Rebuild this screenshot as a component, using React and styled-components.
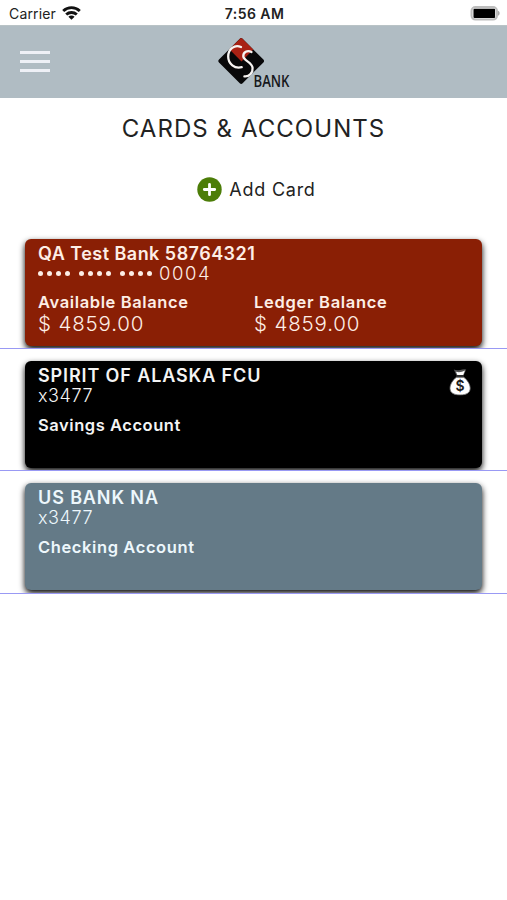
import React from "react";
import styled, { createGlobalStyle } from "styled-components";

const GlobalStyle = createGlobalStyle`
  body {
    margin: 0;
    background: #fff;
    font-family: Inter, "Liberation Sans", sans-serif;
  }
  * {
    box-sizing: border-box;
  }
`;

const Screen = styled.div`
  width: 507px;
  height: 900px;
  background: #fff;
  overflow: hidden;
`;

const StatusBar = styled.div`
  display: grid;
  grid-template-columns: 1fr auto 1fr;
  align-items: center;
  height: 25px;
  padding: 2px 7px 0 9px;
  font-size: 14px;
  line-height: 20px;
  color: #222;
`;

const Carrier = styled.div`
  display: flex;
  align-items: center;
  gap: 6px;
  letter-spacing: 0.15px;
`;

const Time = styled.div`
  font-weight: 600;
  letter-spacing: 0.45px;
`;

const BatteryHolder = styled.div`
  display: flex;
  justify-content: flex-end;
`;

const Header = styled.header`
  display: grid;
  grid-template-columns: 1fr auto 1fr;
  height: 73px;
  padding: 0 20px;
  background: #b0bcc3;
  border-top: 1px solid #b9c3c6;
`;

const MenuButton = styled.button`
  display: flex;
  flex-direction: column;
  gap: 6px;
  width: 30px;
  padding: 25px 0 0;
  border: 0;
  background: none;
`;

const MenuLine = styled.span`
  width: 30px;
  height: 3px;
  background: #eef0f6;
`;

const Logo = styled.svg`
  display: block;
  margin-top: 10px;
  overflow: visible;
`;

const Title = styled.h1`
  margin: 16px 0 0;
  font-size: 24px;
  line-height: 30px;
  font-weight: 400;
  letter-spacing: 1.05px;
  text-align: center;
  color: #222;
`;

const AddCard = styled.div`
  display: flex;
  justify-content: center;
  align-items: center;
  gap: 7px;
  margin-top: 32px;
  padding-left: 6px;
  height: 27px;
  font-size: 18px;
  letter-spacing: 0.75px;
  color: #222;
`;

const CardList = styled.div`
  margin-top: 24px;
`;

const Row = styled.div`
  height: 122.2px;
  padding: 12px 25px 0;
  border-bottom: 1px solid #9999f4;
  overflow: hidden;
`;

const Card = styled.div`
  display: flex;
  justify-content: space-between;
  height: 107px;
  padding: 4px 10px 0 13px;
  border-radius: 6px;
  background: ${(props) => props.$color};
  box-shadow: 0 3px 6px #000;
  color: ${(props) => props.$text};
`;

const CardBody = styled.div`
  flex: 1;
`;

const Line = styled.div`
  display: flex;
  align-items: center;
  height: ${(props) => props.$height}px;
  font-size: ${(props) => props.$size}px;
  font-weight: ${(props) => props.$weight || 300};
  letter-spacing: ${(props) => props.$spacing || 0}px;
  white-space: pre;
`;

const Mask = styled.span`
  display: flex;
  gap: 9px;
  margin-right: 7px;
`;

const DotGroup = styled.span`
  display: flex;
  gap: 4px;
`;

const Dot = styled.i`
  width: 5px;
  height: 5px;
  border-radius: 50%;
  background: currentColor;
`;

const Balances = styled.div`
  display: grid;
  grid-template-columns: 216px 1fr;
  margin-top: 9px;
`;

const BagIcon = styled.svg`
  margin-top: 3px;
`;

const WifiIcon = () => (
  <svg width="19" height="15" viewBox="0 0 19 15">
    <g fill="none" stroke="#111" strokeWidth="2.9">
      <path d="M1.2 5C6 .5 13 .5 17.8 5" />
      <path d="M4.2 8.5c3-2.7 7.6-2.7 10.6 0" />
    </g>
    <path d="M6.4 10.7c1.8-1.5 4.4-1.5 6.2 0L9.5 13.8z" fill="#111" />
  </svg>
);

const BatteryIcon = () => (
  <svg width="30" height="15" viewBox="0 0 30 15">
    <rect x="1.5" y="1" width="25.5" height="12.6" rx="4" fill="#f2f2f2" stroke="#bdbdbd" strokeWidth="2" />
    <rect x="3.5" y="2.8" width="21.6" height="9.2" rx="1" fill="#000" />
    <path d="M28 4.8c2.2.8 2.2 4.2 0 5z" fill="#aaa" />
  </svg>
);

const BankLogo = () => (
  <Logo width="73" height="60" viewBox="0 0 73 60">
    <rect x="-16.7" y="-16.7" width="33.4" height="33.4" rx="2" transform="translate(24.2 25) rotate(45)" fill="#080809" />
    <path d="M23 2.7q1.2-1.2 2.4 0L36.3 13.6 24.5 25.4 12.4 13.3z" fill="#a82114" />
    <g fill="none" stroke="#f7f4f2" strokeWidth="2.3" strokeLinecap="round">
      <path d="M24 11C17.5 8 11.2 13.2 11.2 20.5c0 7.5 6.5 12.5 13.5 10.7" />
      <path d="M34.5 16c-4.2-2.4-8.5.4-8.2 4.4.4 4.6 8.7 5.6 9.3 11.4.4 4.6-3.2 9.200-8.200 8.500" />
    </g>
    <text
      x="36.5"
      y="50.5"
      fontFamily="Open Sans, sans-serif"
      fontSize="17"
      fontWeight="600"
      textLength="36"
      lengthAdjust="spacingAndGlyphs"
      fill="#17191c"
    >
      BANK
    </text>
  </Logo>
);

const PlusIcon = () => (
  <svg width="25" height="25" viewBox="0 0 25 25">
    <circle cx="12.5" cy="12.5" r="12.2" fill="#4c7d08" />
    <path d="M12.5 7.3v10.4M7.3 12.5h10.4" stroke="#fff" strokeWidth="2.8" strokeLinecap="round" />
  </svg>
);

const MoneyBag = () => (
  <BagIcon width="24" height="28" viewBox="0 0 24 28">
    <path
      d="M8.5 9.2h7.2c3.6 2.6 6.6 7.2 6.5 11.2-.1 4.6-4 6.5-10.1 6.5S2.1 25 2 20.4c-.1-4 2.9-8.6 6.5-11.2z"
      fill="#fff"
      stroke="#666"
      strokeWidth=".8"
    />
    <path d="M5.8 1.5q3 1.3 6.4.4t6-.4l-2.6 6H8.5z" fill="#555" />
    <path d="M8 3.8q4.5 1.3 9-1.4L15.2 7H9.3z" fill="#fff" />
    <path d="M8.2 8.3h7.7" stroke="#333" strokeWidth="1.6" />
    <text x="12" y="23" textAnchor="middle" fontFamily="Inter, sans-serif" fontSize="14" fontWeight="600" fill="#222">
      $
    </text>
  </BagIcon>
);

const Bullets = () => (
  <Mask>
    {[0, 1, 2].map((group) => (
      <DotGroup key={group}>
        {[0, 1, 2, 3].map((dot) => (
          <Dot key={dot} />
        ))}
      </DotGroup>
    ))}
  </Mask>
);

const Balance = ({ label, amount, spacing }) => (
  <div>
    <Line $height={20} $size={16.5} $weight={600} $spacing={spacing}>{label}</Line>
    <Line $height={22} $size={20.5} $spacing={0.85}>{amount}</Line>
  </div>
);

const App = () => {
  return (
    <Screen>
      <GlobalStyle />
      <StatusBar>
        <Carrier>
          Carrier
          <WifiIcon />
        </Carrier>
        <Time>7:56 AM</Time>
        <BatteryHolder>
          <BatteryIcon />
        </BatteryHolder>
      </StatusBar>
      <Header>
        <MenuButton aria-label="Menu">
          <MenuLine />
          <MenuLine />
          <MenuLine />
        </MenuButton>
        <BankLogo />
      </Header>

      <Title>CARDS &amp; ACCOUNTS</Title>
      <AddCard>
        <PlusIcon />
        <span>Add Card</span>
      </AddCard>

      <CardList>
        <Row>
          <Card $color="#8a1f05" $text="#fdeee6">
            <CardBody>
              <Line $height={20} $size={18} $weight={600} $spacing={0.47}>QA Test Bank 58764321</Line>
              <Line $height={20} $size={18.5} $spacing={1.6}>
                <Bullets />
                0004
              </Line>
              <Balances>
                <Balance label="Available Balance" amount="$ 4859.00" spacing={0.62} />
                <Balance label="Ledger Balance" amount="$ 4859.00" spacing={0.7} />
              </Balances>
            </CardBody>
          </Card>
        </Row>
        <Row>
          <Card $color="#000" $text="#f4f4f4">
            <CardBody>
              <Line $height={20} $size={18} $weight={600} $spacing={0.88}>SPIRIT OF ALASKA FCU</Line>
              <Line $height={21} $size={18} $spacing={0.55}>x3477</Line>
              <Line $height={37} $size={16.5} $weight={600} $spacing={0.55}>Savings Account</Line>
            </CardBody>
            <MoneyBag />
          </Card>
        </Row>
        <Row>
          <Card $color="#647a87" $text="#edf7fc">
            <CardBody>
              <Line $height={20} $size={18} $weight={600} $spacing={0.88}>US BANK NA</Line>
              <Line $height={21} $size={18} $spacing={0.55}>x3477</Line>
              <Line $height={37} $size={16.5} $weight={600} $spacing={0.6}>Checking Account</Line>
            </CardBody>
          </Card>
        </Row>
      </CardList>
    </Screen>
  );
};

export default App;
